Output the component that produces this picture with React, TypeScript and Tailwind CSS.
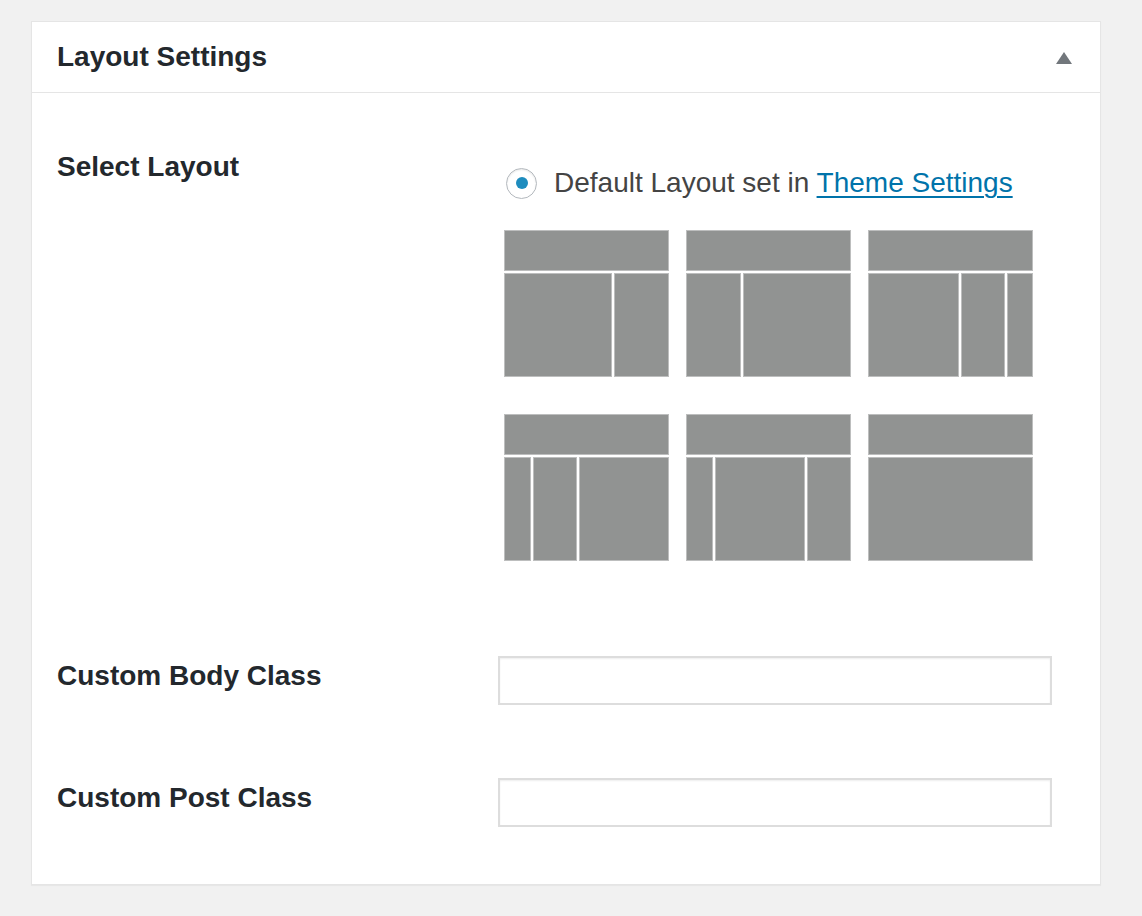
import React from "react";

const B = "bg-[#919392] border border-[#bdbebe]";

function Layout({ cols }: { cols: number[] }) {
  return (
    <div className="flex w-[165px] h-[147px] flex-col gap-[2px]">
      <div className={`${B} h-[41px]`} />
      <div className="flex flex-1 gap-[2px]">
        {cols.map((w, i) => (
          <div key={i} className={B} style={{ width: w }} />
        ))}
      </div>
    </div>
  );
}

export default function App() {
  return (
    <div
      className="min-h-[916px] bg-[#f1f1f1] pl-[31px] pt-[21px]"
      style={{ fontFamily: '"Liberation Sans", Arial, sans-serif' }}
    >
      <div className="w-[1070px] h-[864px] bg-white border border-[#e5e5e5] shadow-[0_1px_1px_rgba(0,0,0,0.04)]">
        <div className="flex h-[71px] items-center justify-between border-b border-[#e5e5e5] pl-[25px] pr-[28px]">
          <h2 className="text-[28px] font-bold text-[#23282d] leading-[40px]">Layout Settings</h2>
          <svg width="16" height="12" viewBox="0 0 16 12" className="mt-[1px]">
            <polygon points="8,0 16,12 0,12" fill="#72777c" />
          </svg>
        </div>

        <div className="pl-[25px] pt-[54px]">
          <div className="flex">
            <div className="w-[441px] text-[28px] font-bold leading-[40px] text-[#23282d]">Select Layout</div>
            <div>
              <label className="ml-[8px] mt-[16px] flex items-center gap-[17px] text-[28px] leading-[40px] text-[#444]">
                <span className="flex h-[31px] w-[31px] items-center justify-center rounded-full border border-[#b4b9be] bg-white shadow-[inset_0_1px_2px_rgba(0,0,0,0.1)]">
                  <span className="h-[12px] w-[12px] rounded-full bg-[#1e8cbe]" />
                </span>
                <span>
                  Default Layout set in{" "}
                  <a className="text-[#0073aa] underline underline-offset-[4px] decoration-[2px]" href="#">
                    Theme Settings
                  </a>
                </span>
              </label>
              <div className="ml-[6px] mt-[27px] grid grid-cols-[165px_165px_165px] gap-x-[17px] gap-y-[37px]">
                <Layout cols={[108, 55]} />
                <Layout cols={[55, 108]} />
                <Layout cols={[91, 44, 26]} />
                <Layout cols={[27, 44, 90]} />
                <Layout cols={[27, 90, 44]} />
                <Layout cols={[165]} />
              </div>
            </div>
          </div>

          <div className="mt-[95px] flex">
            <div className="w-[441px] text-[28px] font-bold leading-[40px] text-[#23282d]">Custom Body Class</div>
            <input
              type="text"
              className="h-[49px] w-[554px] border-2 border-[#dddddd] bg-white shadow-[inset_0_1px_2px_rgba(0,0,0,0.07)] outline-none"
            />
          </div>

          <div className="mt-[73px] flex">
            <div className="w-[441px] text-[28px] font-bold leading-[40px] text-[#23282d]">Custom Post Class</div>
            <input
              type="text"
              className="h-[49px] w-[554px] border-2 border-[#dddddd] bg-white shadow-[inset_0_1px_2px_rgba(0,0,0,0.07)] outline-none"
            />
          </div>
        </div>
      </div>
    </div>
  );
}
